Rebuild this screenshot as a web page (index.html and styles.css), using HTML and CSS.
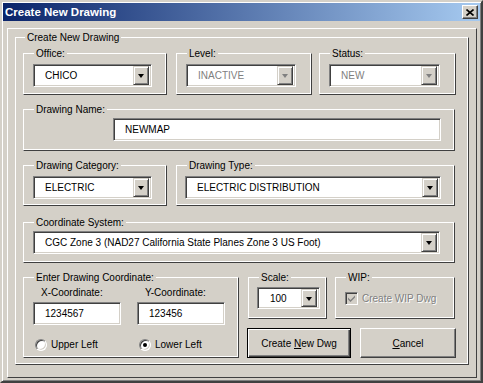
FILE: index.html
```html
<!DOCTYPE html>
<html>
<head>
    <title>Create New Drawing</title>
    <link rel="stylesheet" href="styles.css">
</head>
<body>
    <div class="dialog">
        <div class="titlebar">
            <span class="title">Create New Drawing</span>
            <span class="close-btn">
                <svg width="8" height="7" viewBox="0 0 8 7"><path d="M0.5 0.5 L7.5 6.5 M7.5 0.5 L0.5 6.5" stroke="#000" stroke-width="1.6" fill="none"/></svg>
            </span>
        </div>

        <div class="panel">
            <div class="group outer-group">
                <span class="group-label">Create New Drawing</span>

                <!-- office / level / status -->
                <div class="row row-1">
                    <div class="group office-group">
                        <span class="group-label">Office:</span>
                        <div class="combo office-combo">
                            <span class="combo-text">CHICO</span>
                            <span class="drop-btn"><i class="arrow"></i></span>
                        </div>
                    </div>
                    <div class="group level-group">
                        <span class="group-label">Level:</span>
                        <div class="combo level-combo disabled">
                            <span class="combo-text">INACTIVE</span>
                            <span class="drop-btn"><i class="arrow"></i></span>
                        </div>
                    </div>
                    <div class="group status-group">
                        <span class="group-label">Status:</span>
                        <div class="combo status-combo disabled">
                            <span class="combo-text">NEW</span>
                            <span class="drop-btn"><i class="arrow"></i></span>
                        </div>
                    </div>
                </div>

                <div class="row row-2">
                    <div class="group name-group">
                        <span class="group-label">Drawing Name:</span>
                        <div class="field name-field">NEWMAP</div>
                    </div>
                </div>

                <div class="row row-3">
                    <div class="group category-group">
                        <span class="group-label">Drawing Category:</span>
                        <div class="combo category-combo">
                            <span class="combo-text">ELECTRIC</span>
                            <span class="drop-btn"><i class="arrow"></i></span>
                        </div>
                    </div>
                    <div class="group type-group">
                        <span class="group-label">Drawing Type:</span>
                        <div class="combo type-combo">
                            <span class="combo-text">ELECTRIC DISTRIBUTION</span>
                            <span class="drop-btn"><i class="arrow"></i></span>
                        </div>
                    </div>
                </div>

                <div class="row row-4">
                    <div class="group coord-group">
                        <span class="group-label">Coordinate System:</span>
                        <div class="combo coord-combo">
                            <span class="combo-text">CGC Zone 3 (NAD27 California State Planes Zone 3 US Foot)</span>
                            <span class="drop-btn"><i class="arrow"></i></span>
                        </div>
                    </div>
                </div>

                <div class="row row-5">
                    <div class="group enter-group">
                        <span class="group-label">Enter Drawing Coordinate:</span>
                        <div class="coord-cols">
                            <div class="coord-col">
                                <span class="col-label">X-Coordinate:</span>
                                <div class="field coord-field">1234567</div>
                                <label class="radio-row"><span class="radio"></span>Upper Left</label>
                            </div>
                            <div class="coord-col">
                                <span class="col-label">Y-Coordinate:</span>
                                <div class="field coord-field">123456</div>
                                <label class="radio-row"><span class="radio checked"></span>Lower Left</label>
                            </div>
                        </div>
                    </div>

                    <div class="right-col">
                        <div class="right-top">
                            <div class="group scale-group">
                                <span class="group-label">Scale:</span>
                                <div class="combo scale-combo">
                                    <span class="combo-text">100</span>
                                    <span class="drop-btn"><i class="arrow"></i></span>
                                </div>
                            </div>
                            <div class="group wip-group">
                                <span class="group-label">WIP:</span>
                                <label class="check-row disabled">
                                    <span class="checkbox">
                                        <svg width="9" height="9" viewBox="0 0 9 9"><path d="M1 3.5 L3.5 6 L8 1.5 L8 3.5 L3.5 8 L1 5.5 Z" fill="#808080"/></svg>
                                    </span>
                                    Create WIP Dwg
                                </label>
                            </div>
                        </div>
                        <div class="buttons">
                            <button class="btn default-btn">Create <u>N</u>ew Dwg</button>
                            <button class="btn cancel-btn"><u>C</u>ancel</button>
                        </div>
                    </div>
                </div>
            </div>
        </div>
    </div>
</body>
</html>
```

FILE: styles.css
```css
body {
    margin: 0;
    background-color: #d4d0c8;
    font-family: "Liberation Sans", Arial, sans-serif;
    font-size: 10px;
    color: #000000;
}

.dialog {
    box-sizing: border-box;
    width: 483px;
    height: 383px;
    padding: 1px;
    background-color: #d4d0c8;
    border: 2px solid;
    border-color: #d4d0c8 #404040 #404040 #d4d0c8;
    box-shadow: inset 1px 1px 0 #ffffff, inset -1px -1px 0 #808080;
}

/* title bar */
.titlebar {
    height: 18px;
    display: flex;
    align-items: center;
    justify-content: space-between;
    background: linear-gradient(to right, #0a246a, #a6caf0);
}
.title {
    padding-left: 2px;
    color: #ffffff;
    font-weight: bold;
    font-size: 11.5px;
}
.close-btn {
    box-sizing: border-box;
    width: 16px;
    height: 14px;
    margin-right: 2px;
    display: flex;
    align-items: center;
    justify-content: center;
    background-color: #d4d0c8;
    border: 1px solid;
    border-color: #ffffff #404040 #404040 #ffffff;
    box-shadow: inset -1px -1px 0 #808080;
}

/* frames */
.panel {
    box-sizing: border-box;
    width: 470px;
    height: 350px;
    margin: 7px 0 0 4px;
    border: 1px solid;
    border-color: #ffffff #404040 #404040 #ffffff;
}

.group {
    box-sizing: border-box;
    display: flex;
    flex-direction: column;
    align-items: flex-start;
    border: 1px solid;
    border-color: #ffffff #404040 #404040 #ffffff;
    box-shadow: inset -1px -1px 0 #ffffff;
}
.group-label {
    display: inline-block;
    height: 13px;
    line-height: 13px;
    margin: -7px 0 0 10px;
    padding: 0 2px;
    background-color: #d4d0c8;
    white-space: nowrap;
}

.outer-group {
    width: 454px;
    height: 328px;
    margin: 8px 0 0 7px;
    padding: 0 0 0 7px;
}
.outer-group > .group-label {
    margin-left: 2px;
}

.row {
    display: flex;
    align-items: flex-start;
}
.row-1 { margin-top: 9px; }
.row-2 { margin-top: 14px; }
.row-3 { margin-top: 14px; }
.row-4 { margin-top: 16px; }
.row-5 { margin-top: 14px; }

.office-group { width: 144px; height: 42px; }
.level-group { width: 136px; height: 42px; margin-left: 9px; }
.status-group { width: 137px; height: 42px; margin-left: 7px; }
.name-group { width: 432px; height: 42px; }
.category-group { width: 144px; height: 41px; }
.type-group { width: 279px; height: 41px; margin-left: 9px; }
.coord-group { width: 432px; height: 41px; }
.enter-group { width: 216px; height: 81px; }
.scale-group { width: 79px; height: 42px; margin-left: 1px; }
.wip-group { width: 120px; height: 42px; margin-left: 8px; }

/* combo boxes and fields */
.combo,
.field {
    box-sizing: border-box;
    display: flex;
    align-items: center;
    height: 23px;
    background-color: #ffffff;
    border: 1px solid;
    border-color: #808080 #ffffff #ffffff #808080;
    box-shadow: inset 1px 1px 0 #404040, inset -1px -1px 0 #d4d0c8;
}
.combo {
    margin: 4px 0 0 9px;
    padding: 2px;
}
.combo-text {
    flex: 1;
    padding-left: 9px;
    white-space: nowrap;
    overflow: hidden;
}
.combo.disabled .combo-text {
    color: #808080;
    text-shadow: 1px 1px 0 #ffffff;
}
.drop-btn {
    box-sizing: border-box;
    width: 16px;
    height: 19px;
    display: flex;
    align-items: center;
    justify-content: center;
    background-color: #d4d0c8;
    border: 1px solid;
    border-color: #d4d0c8 #404040 #404040 #d4d0c8;
    box-shadow: inset 1px 1px 0 #ffffff, inset -1px -1px 0 #808080;
}
.arrow {
    width: 0;
    height: 0;
    border-left: 3.5px solid transparent;
    border-right: 3.5px solid transparent;
    border-top: 4px solid #000000;
    margin-top: 1px;
}
.combo.disabled .arrow {
    border-top-color: #808080;
}

.office-combo { width: 119px; }
.level-combo { width: 110px; }
.status-combo { width: 111px; }
.category-combo { width: 119px; }
.type-combo { width: 256px; margin-left: 8px; }
.coord-combo { width: 407px; margin-top: 2px; }
.scale-combo { width: 63px; height: 22px; margin: 3px 0 0 8px; }
.scale-combo .combo-text { padding-left: 10px; }
.scale-combo .drop-btn { height: 18px; }

.field {
    padding-left: 11px;
}
.name-field {
    width: 328px;
    margin: 2px 0 0 89px;
}

/* coordinates */
.coord-cols {
    display: flex;
    margin: 2px 0 0 9px;
}
.coord-col {
    width: 88px;
    display: flex;
    flex-direction: column;
}
.coord-col + .coord-col {
    margin-left: 16px;
}
.col-label {
    height: 13px;
    line-height: 13px;
    padding-left: 8px;
}
.coord-field {
    width: 88px;
    margin-top: 3px;
}
.radio-row {
    display: flex;
    align-items: center;
    height: 13px;
    margin: 13px 0 0 2px;
    white-space: nowrap;
}
.radio {
    position: relative;
    box-sizing: border-box;
    width: 12px;
    height: 12px;
    margin-right: 4px;
    border-radius: 50%;
    background-color: #ffffff;
    border: 1px solid;
    border-color: #808080 #ffffff #ffffff #808080;
    box-shadow: inset 1px 1px 0 #404040, inset -1px -1px 0 #d4d0c8;
}
.radio.checked::after {
    content: "";
    position: absolute;
    left: 3px;
    top: 3px;
    width: 4px;
    height: 4px;
    border-radius: 50%;
    background-color: #000000;
}

/* right column */
.right-col {
    margin-left: 8px;
    display: flex;
    flex-direction: column;
}
.right-top {
    display: flex;
}
.check-row {
    display: flex;
    align-items: center;
    margin: 8px 0 0 9px;
    white-space: nowrap;
}
.check-row.disabled {
    color: #808080;
    text-shadow: 1px 1px 0 #ffffff;
}
.checkbox {
    box-sizing: border-box;
    width: 13px;
    height: 13px;
    margin-right: 4px;
    display: flex;
    align-items: center;
    justify-content: center;
    background-color: #d4d0c8;
    border: 1px solid;
    border-color: #808080 #ffffff #ffffff #808080;
    box-shadow: inset 1px 1px 0 #404040, inset -1px -1px 0 #d4d0c8;
}

.buttons {
    display: flex;
    margin-top: 9px;
}
.btn {
    box-sizing: border-box;
    height: 30px;
    padding: 0;
    font-family: inherit;
    font-size: 10px;
    color: #000000;
    background-color: #d4d0c8;
    border: 1px solid;
    border-color: #ffffff #404040 #404040 #ffffff;
    box-shadow: inset -1px -1px 0 #808080;
}
.default-btn {
    width: 104px;
    border-color: #000000;
    box-shadow: inset 1px 1px 0 #ffffff, inset -1px -1px 0 #404040, inset -2px -2px 0 #808080;
}
.cancel-btn {
    width: 96px;
    margin-left: 9px;
}
```
